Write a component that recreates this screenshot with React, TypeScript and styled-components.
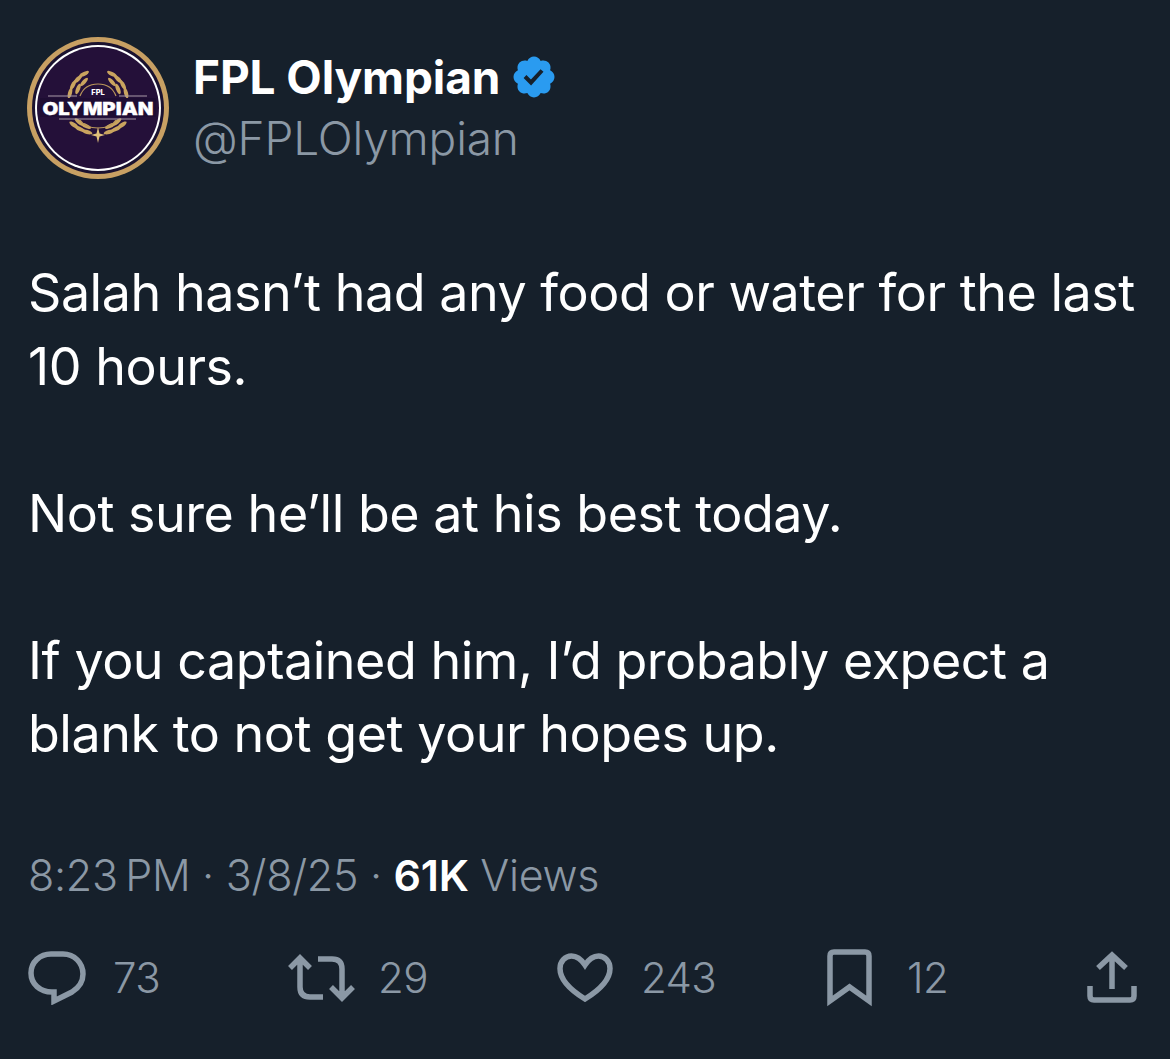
import React from "react";
import styled, { createGlobalStyle } from "styled-components";

const Global = createGlobalStyle`
  html, body { margin: 0; padding: 0; background: #16202b; }
  body { font-family: Inter, "Noto Sans", sans-serif; -webkit-font-smoothing: antialiased; }
`;
const Page = styled.div`
  width: 1170px;
  height: 1059px;
  box-sizing: border-box;
  background: #16202b;
  padding: 37px 0 0 27px;
  overflow: hidden;
`;
const Header = styled.header`
  display: flex;
  align-items: flex-start;
  gap: 24px;
`;
const Avatar = styled.svg`
  width: 142px;
  height: 142px;
  flex: none;
  display: block;
`;
const Identity = styled.div`
  display: flex;
  flex-direction: column;
  margin-top: 9px;
`;
const NameRow = styled.div`
  display: flex;
  align-items: center;
  gap: 11px;
  height: 62px;
`;
const Name = styled.span`
  color: #fff;
  font-size: 46px;
  font-weight: 700;
  letter-spacing: -0.1px;
`;
const Badge = styled.svg`
  width: 48px;
  height: 48px;
  fill: #2a9bf0;
  margin-left: -1px;
`;
const Handle = styled.span`
  color: #8b98a5;
  font-size: 46px;
  font-weight: 300;
  letter-spacing: -0.15px;
  line-height: 60px;
`;
const Body = styled.div`
  margin: 77px 0 0 1px;
  color: #fff;
  font-size: 52px;
  font-weight: 400;
  line-height: 73.5px;
  letter-spacing: -0.47px;
  white-space: pre-line;
`;
const Meta = styled.div`
  margin: 79px 0 0 1px;
  display: flex;
  align-items: baseline;
  color: #8b98a5;
  font-size: 43px;
  font-weight: 300;
  letter-spacing: -0.3px;
  line-height: 50px;
  white-space: pre;
`;
const Strong = styled.span`
  color: #fff;
  font-weight: 600;
`;
const Actions = styled.div`
  margin: 49px 0 0 1px;
  display: flex;
  align-items: center;
  height: 58px;
`;
const Action = styled.div<{ $width: number; $gap?: number }>`
  width: ${(p) => p.$width}px;
  flex: none;
  display: flex;
  align-items: center;
  gap: ${(p) => p.$gap ?? 27}px;
`;
const Count = styled.span`
  color: #8b98a5;
  font-size: 42px;
  font-weight: 300;
  letter-spacing: -0.6px;
  line-height: 50px;
`;
const Icon = styled.svg<{ $w: number; $h: number }>`
  width: ${(p) => p.$w}px;
  height: ${(p) => p.$h}px;
  flex: none;
  display: block;
  fill: none;
  stroke: #8b98a5;
  stroke-width: 5.5;
  stroke-linejoin: miter;
`;

const leaves = [
  { x: 43, y: 56, r: -75 },
  { x: 46, y: 48, r: -62 },
  { x: 51, y: 42, r: -45 },
  { x: 57, y: 37, r: -28 },
  { x: 51, y: 52, r: -68 },
  { x: 57, y: 45, r: -48 },
  { x: 47, y: 88, r: 35 },
  { x: 53, y: 92, r: 25 },
  { x: 60, y: 95, r: 15 },
  { x: 52, y: 85, r: 40 },
  { x: 59, y: 89, r: 25 },
];

const Logo = () => (
  <Avatar viewBox="0 0 142 142">
    <circle cx="71" cy="71" r="71" fill="#c8a063" />
    <circle cx="71" cy="71" r="66" fill="#1b1230" />
    <circle cx="71" cy="71" r="63" fill="#fff" />
    <circle cx="71" cy="71" r="61" fill="#241039" />
    <g fill="#c9a45f">
      {leaves.map((l) => (
        <React.Fragment key={`${l.x}-${l.y}`}>
          <ellipse cx={l.x} cy={l.y} rx="5.5" ry="2" transform={`rotate(${l.r} ${l.x} ${l.y})`} />
          <ellipse cx={142 - l.x} cy={l.y} rx="5.5" ry="2" transform={`rotate(${-l.r} ${142 - l.x} ${l.y})`} />
        </React.Fragment>
      ))}
    </g>
    <path d="M53 59 C56 51 63 47 71 47 C79 47 86 51 89 59 M53 83 C57 89 63 91 71 91 C79 91 85 89 89 83" fill="none" stroke="#b8955a" strokeWidth="1.2" />
    <path d="M71 90 L72.5 96.5 L78 98 L72.5 99.5 L71 106 L69.5 99.5 L64 98 L69.5 96.5 Z" fill="#e0c07a" />
    <path d="M21 59 H50 M92 59 H120 M32 82 H109" stroke="#a89aa8" strokeWidth="1.2" />
    <rect x="13" y="61" width="116" height="19" fill="#1e0d33" />
    <text x="71" y="58" textAnchor="middle" fontFamily="Inter, sans-serif" fontWeight="800" fontSize="7.5" fill="#fff">FPL</text>
    <text x="71" y="77.5" textAnchor="middle" fontFamily="Inter, sans-serif" fontWeight="900" fontSize="18" textLength="111" lengthAdjust="spacingAndGlyphs" fill="#fff" stroke="#fff" strokeWidth="0.3">OLYMPIAN</text>
  </Avatar>
);

export default function App() {
  return (
    <Page>
      <Global />
      <Header>
        <Logo />
        <Identity>
          <NameRow>
            <Name>FPL Olympian</Name>
            <Badge viewBox="0 0 24 24">
              <path d="M22.25 12c0-1.43-.88-2.67-2.19-3.34.46-1.39.2-2.9-.81-3.91s-2.52-1.27-3.91-.81c-.66-1.31-1.91-2.19-3.34-2.19s-2.67.88-3.33 2.19c-1.4-.46-2.91-.2-3.92.81s-1.26 2.52-.8 3.91c-1.31.67-2.2 1.91-2.2 3.34s.89 2.67 2.2 3.34c-.46 1.39-.21 2.9.8 3.91s2.52 1.26 3.91.81c.67 1.31 1.91 2.19 3.34 2.19s2.68-.88 3.34-2.19c1.39.45 2.9.2 3.91-.81s1.27-2.52.81-3.91c1.31-.67 2.19-1.91 2.19-3.34zm-11.71 4.2L6.8 12.46l1.41-1.42 2.26 2.26 4.8-5.23 1.47 1.36-6.2 6.77z" />
            </Badge>
          </NameRow>
          <Handle>@FPLOlympian</Handle>
        </Identity>
      </Header>
      <Body>{"Salah hasn’t had any food or water for the last\n10 hours.\n\nNot sure he’ll be at his best today.\n\nIf you captained him, I’d probably expect a\nblank to not get your hopes up."}</Body>
      <Meta>8:23{"\u2009"}PM · 3/8/25 · <Strong>61K</Strong> Views</Meta>
      <Actions>
        <Action $width={259}>
          <Icon $w={58} $h={54} viewBox="0 0 58 54">
            <path d="M23 3 H35 C46.5 3 55 12 55 23 C55 31 50.5 37 44 41 L26 50 V41 H24 C12 41 3 33 3 22 C3 11 12 3 23 3 Z" />
          </Icon>
          <Count>73</Count>
        </Action>
        <Action $width={270} $gap={23}>
          <Icon $w={68} $h={50} viewBox="0 0 68 50">
            <path d="M3 15 L13 5 L23 15 M13 6 V34 Q13 44 23 44 H36 M31 6 H45 Q55 6 55 16 V44 M44 34 L55 45 L66 34" />
          </Icon>
          <Count>29</Count>
        </Action>
        <Action $width={270} $gap={28}>
          <Icon $w={56} $h={49} viewBox="0 0 56 49">
            <path d="M28 12 C24 6 19 3 14.5 3 C8 3 3 8.5 3 15.5 C3 28 15 38 28 46 C41 38 53 28 53 15.5 C53 8.5 48 3 41.5 3 C37 3 32 6 28 12 Z" />
          </Icon>
          <Count>243</Count>
        </Action>
        <Action $width={260} $gap={35}>
          <Icon $w={45} $h={58} viewBox="0 0 45 58">
            <path d="M3 7 Q3 3 7 3 H38 Q42 3 42 7 V52 L22.5 38 L3 52 Z" />
          </Icon>
          <Count>12</Count>
        </Action>
        <Action $width={52}>
          <Icon $w={52} $h={55} viewBox="0 0 52 55">
            <path d="M11 18 L25 5 L39 18 M25 6 V39 M3 36 V46 Q3 50 7 50 H43 Q47 50 47 46 V36" />
          </Icon>
        </Action>
      </Actions>
    </Page>
  );
}
